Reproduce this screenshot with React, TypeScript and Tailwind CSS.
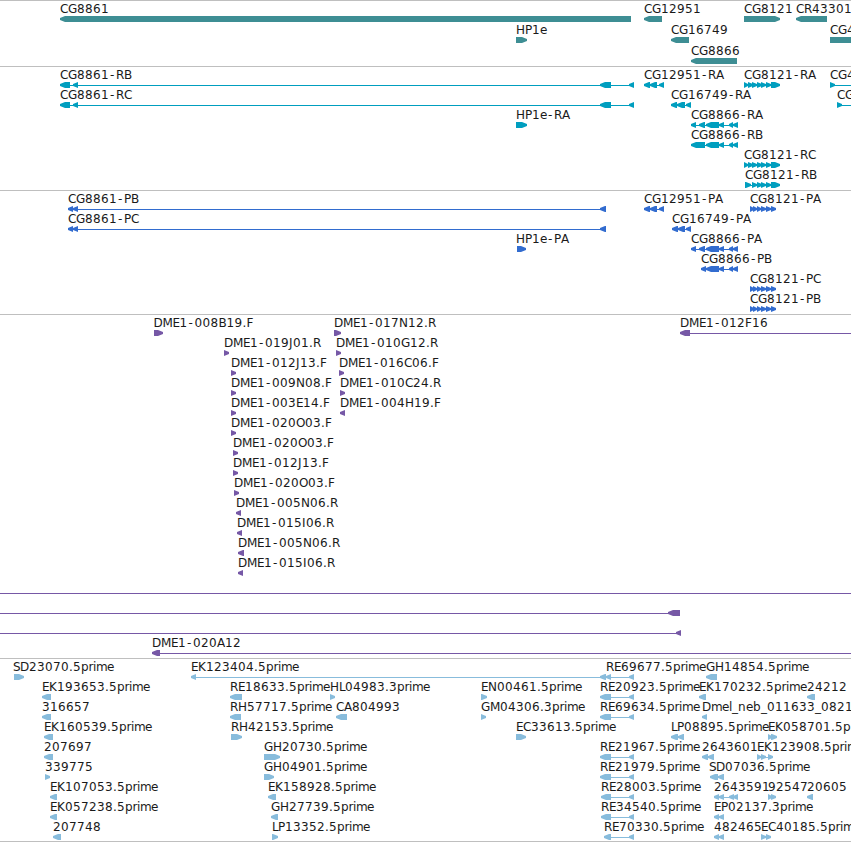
import React from 'react';

type Span = [number, number];

interface Feature {
  row: number;
  x: number;
  label?: string;
  dir: 'L' | 'R';
  blocks: Span[];
  // connector range, when it runs past the blocks
  line?: Span;
}

interface Track {
  id: string;
  height: string;
  pitch: number;
  color: string;
  features: Feature[];
}

const WIDTH = 851;

// Advance widths of the label glyphs
const ADVANCE: Record<string, number> = {
  A: 8, B: 8, C: 8, D: 9, E: 7, F: 7, G: 9, H: 9, I: 4, J: 4, K: 8, L: 6, M: 10, N: 9, O: 9,
  P: 7, R: 8, S: 7, '-': 7, '.': 4, _: 6,
  p: 7.5, r: 4.5, i: 3, m: 11, e: 7, l: 3, n: 8, b: 8,
};

const glyphPositions = (label: string, start: number) => {
  let x = start;
  return label
    .split('')
    .map((char) => {
      // the hyphen sits in the middle of its wide cell
      const current = char === '-' ? x + 1 : x;
      x += ADVANCE[char] ?? 8;
      return current;
    })
    .join(' ');
};

const f = (row: number, x: number, label: string, dir: 'L' | 'R', blocks: Span[], line?: Span): Feature => ({
  row, x, label, dir, blocks, line,
});

const CG12951: Span[] = [[644, 650], [650, 657], [659, 664]];
const CG8866_TAIL: Span[] = [[706, 719], [719, 724], [729, 733], [733, 738]];
const CG8121_TAIL: Span[] = [[752, 757], [757, 762], [761, 766], [766, 771], [771, 780]];
const CG8121_P: Span[] = [[750, 754], [753, 757], [757, 761], [761, 766], [766, 771], [771, 776]];
const RE_BLOCKS: Span[] = [[600, 611], [629, 634]];

const TRACKS: Track[] = [
  {
    id: 'gene',
    height: 'h-[66px]',
    pitch: 21,
    color: 'text-[#3e8e94]',
    features: [
      f(0, 60, 'CG8861', 'L', [[60, 631]]),
      f(0, 644, 'CG12951', 'L', [[644, 662]]),
      f(0, 744, 'CG8121', 'R', [[744, 780]]),
      f(0, 796, 'CR43301', 'L', [[796, 827]]),
      f(1, 516, 'HP1e', 'R', [[516, 527]]),
      f(1, 671, 'CG16749', 'L', [[671, 689]]),
      f(1, 830, 'CG4', 'R', [[830, 880]]),
      f(2, 691, 'CG8866', 'L', [[691, 737]]),
    ],
  },
  {
    id: 'transcript',
    height: 'h-[124px]',
    pitch: 20,
    color: 'text-[#009ebf]',
    features: [
      f(0, 60, 'CG8861-RB', 'L', [[60, 70], [73, 78], [600, 611], [629, 634]]),
      f(0, 644, 'CG12951-RA', 'L', CG12951),
      f(0, 744, 'CG8121-RA', 'R', [[744, 748], [748, 753], ...CG8121_TAIL]),
      f(0, 830, 'CG4', 'R', [[830, 835]], [830, 860]),
      f(1, 60, 'CG8861-RC', 'L', [[60, 70], [73, 78], [600, 611], [629, 634]]),
      f(1, 671, 'CG16749-RA', 'L', [[671, 677], [677, 685], [686, 691]]),
      f(1, 837, 'CG', 'R', [[837, 842]], [837, 860]),
      f(2, 516, 'HP1e-RA', 'R', [[516, 527]]),
      f(2, 691, 'CG8866-RA', 'L', [[691, 696], [699, 705], ...CG8866_TAIL]),
      f(3, 691, 'CG8866-RB', 'L', [[691, 705], ...CG8866_TAIL]),
      f(4, 744, 'CG8121-RC', 'R', [[744, 748], [748, 753], ...CG8121_TAIL]),
      f(5, 745, 'CG8121-RB', 'R', [[745, 751], ...CG8121_TAIL]),
    ],
  },
  {
    id: 'cds',
    height: 'h-[124px]',
    pitch: 20,
    color: 'text-[#326ccf]',
    features: [
      f(0, 68, 'CG8861-PB', 'L', [[68, 73], [73, 78], [600, 606]]),
      f(0, 644, 'CG12951-PA', 'L', CG12951),
      f(0, 750, 'CG8121-PA', 'R', CG8121_P),
      f(1, 68, 'CG8861-PC', 'L', [[68, 73], [73, 78], [600, 606]]),
      f(1, 672, 'CG16749-PA', 'L', [[672, 678], [678, 685], [686, 691]]),
      f(2, 516, 'HP1e-PA', 'R', [[517, 526]]),
      f(2, 691, 'CG8866-PA', 'L', [[691, 696], [699, 705], ...CG8866_TAIL]),
      f(3, 701, 'CG8866-PB', 'L', [[701, 706], ...CG8866_TAIL]),
      f(4, 750, 'CG8121-PC', 'R', CG8121_P),
      f(5, 750, 'CG8121-PB', 'R', CG8121_P),
    ],
  },
  {
    id: 'clones',
    height: 'h-[344px]',
    pitch: 20,
    color: 'text-[#7658a6]',
    features: [
      f(0, 153.5, 'DME1-008B19.F', 'R', [[154, 163]]),
      f(0, 334, 'DME1-017N12.R', 'R', [[334, 341]]),
      f(0, 680, 'DME1-012F16', 'L', [[680, 690]], [680, 860]),
      f(1, 224, 'DME1-019J01.R', 'R', [[224, 229]]),
      f(1, 336, 'DME1-010G12.R', 'R', [[336, 341]]),
      f(2, 231, 'DME1-012J13.F', 'R', [[231, 236]]),
      f(2, 339, 'DME1-016C06.F', 'R', [[339, 344]]),
      f(3, 231, 'DME1-009N08.F', 'R', [[231, 236]]),
      f(3, 340, 'DME1-010C24.R', 'R', [[340, 345]]),
      f(4, 231, 'DME1-003E14.F', 'R', [[231, 236]]),
      f(4, 340, 'DME1-004H19.F', 'L', [[340, 345]]),
      f(5, 231, 'DME1-020O03.F', 'R', [[231, 236]]),
      f(6, 233, 'DME1-020O03.F', 'R', [[233, 238]]),
      f(7, 233, 'DME1-012J13.F', 'R', [[233, 238]]),
      f(8, 234, 'DME1-020O03.F', 'R', [[234, 239]]),
      f(9, 236, 'DME1-005N06.R', 'L', [[236, 241]]),
      f(10, 237, 'DME1-015I06.R', 'L', [[237, 242]]),
      f(11, 238, 'DME1-005N06.R', 'L', [[238, 244]]),
      f(12, 238, 'DME1-015I06.R', 'L', [[238, 243]]),
      f(13, 0, '', 'L', [], [0, 860]),
      f(14, 0, '', 'L', [[668, 680]], [0, 680]),
      f(15, 0, '', 'L', [[676, 681]], [0, 681]),
      f(16, 152, 'DME1-020A12', 'L', [[152, 160]], [152, 860]),
    ],
  },
  {
    id: 'est',
    height: 'h-[183px]',
    pitch: 20,
    color: 'text-[#88bcdc]',
    features: [
      f(0, 13, 'SD23070.5prime', 'R', [[14, 24]]),
      f(0, 191, 'EK123404.5prime', 'L', [[191, 196], [600, 606]]),
      f(0, 606, 'RE69677.5prime', 'L', [[606, 611], [629, 634]]),
      f(0, 706, 'GH14854.5prime', 'L', [[706, 717]]),
      f(1, 42, 'EK193653.5prime', 'L', [[42, 51]]),
      f(1, 230, 'RE18633.5prime', 'L', [[230, 242]]),
      f(1, 330, 'HL04983.3prime', 'R', [[330, 335]]),
      f(1, 481, 'EN00461.5prime', 'R', [[481, 487]]),
      f(1, 600, 'RE20923.5prime', 'L', RE_BLOCKS),
      f(1, 699, 'EK170232.5prime', 'L', [[699, 706]]),
      f(1, 807, '24212', 'L', [[807, 815]]),
      f(2, 42, '316657', 'L', [[42, 51]]),
      f(2, 230, 'RH57717.5prime', 'L', [[230, 241]]),
      f(2, 336, 'CA804993', 'L', [[336, 347]]),
      f(2, 481, 'GM04306.3prime', 'R', [[481, 486]]),
      f(2, 600, 'RE69634.5prime', 'L', RE_BLOCKS),
      f(2, 702, 'Dmel_neb_011633_0821', 'L', [[702, 707]]),
      f(3, 44, 'EK160539.5prime', 'L', [[44, 53]]),
      f(3, 231, 'RH42153.5prime', 'R', [[231, 242]]),
      f(3, 516, 'EC33613.5prime', 'R', [[516, 526]]),
      f(3, 671, 'LP08895.5prime', 'L', [[671, 678], [678, 684]]),
      f(3, 768, 'EK058701.5p', 'R', [[768, 772], [771, 777]]),
      f(4, 44, '207697', 'L', [[44, 53]]),
      f(4, 264, 'GH20730.5prime', 'R', [[264, 280]]),
      f(4, 600, 'RE21967.5prime', 'L', RE_BLOCKS),
      f(4, 702, '2643601', 'L', [[702, 708], [708, 714]]),
      f(4, 757, 'EK123908.5prime', 'R', [[757, 761], [761, 766], [768, 773]]),
      f(5, 45, '339775', 'R', [[45, 50]]),
      f(5, 264, 'GH04901.5prime', 'R', [[264, 274]]),
      f(5, 600, 'RE21979.5prime', 'L', RE_BLOCKS),
      f(5, 709, 'SD07036.5prime', 'L', [[710, 718], [718, 724]]),
      f(6, 50, 'EK107053.5prime', 'L', [[50, 57]]),
      f(6, 268, 'EK158928.5prime', 'L', [[268, 276]]),
      f(6, 601, 'RE28003.5prime', 'L', [[601, 611], [629, 634]]),
      f(6, 714, '2643591', 'L', [[714, 719], [719, 724], [729, 734], [733, 738]]),
      f(6, 768, '92547', 'R', [[768, 772], [771, 776]]),
      f(6, 807, '20605', 'L', [[807, 813]]),
      f(7, 50, 'EK057238.5prime', 'L', [[50, 57]]),
      f(7, 271, 'GH27739.5prime', 'L', [[271, 278]]),
      f(7, 601, 'RE34540.5prime', 'L', [[601, 611], [629, 634]]),
      f(7, 714, 'EP02137.3prime', 'L', [[714, 719], [719, 724]]),
      f(8, 53, '207748', 'L', [[53, 61]]),
      f(8, 272, 'LP13352.5prime', 'R', [[272, 278]]),
      f(8, 604, 'RE70330.5prime', 'L', [[604, 611], [629, 634]]),
      f(8, 714, '482465', 'L', [[714, 719], [719, 724]]),
      f(8, 761, 'EC40185.5prime', 'R', [[761, 766], [766, 771]]),
    ],
  },
];

// Box with a blunt arrow head on the strand's side
function Block({ span, dir, top }: { span: Span; dir: 'L' | 'R'; top: number }) {
  const [a, b] = span;
  const head = Math.min(5, b - a);
  const bottom = top + 6;
  const tip = dir === 'L' ? a : b;
  const neck = dir === 'L' ? a + head : b - head;
  const end = dir === 'L' ? b : a;
  return (
    <polygon
      points={`${tip},${top + 2} ${neck},${top} ${end},${top} ${end},${bottom} ${neck},${bottom} ${tip},${top + 4}`}
    />
  );
}

function FeatureGlyph({ feature, pitch }: { feature: Feature; pitch: number }) {
  const { row, x, label, dir, blocks, line } = feature;
  const y = row * pitch;
  const range = line ?? (blocks.length > 1 ? [blocks[0][0], blocks[blocks.length - 1][1]] : null);

  return (
    <g>
      {range && <rect x={range[0]} y={y + 18} width={range[1] - range[0]} height={1} />}
      {blocks.map((span) => (
        <Block key={span[0]} span={span} dir={dir} top={y + 15} />
      ))}
      {label && (
        <text x={glyphPositions(label, x)} y={y + 12} className="fill-[#1a1a1a]">
          {label}
        </text>
      )}
    </g>
  );
}

function TrackPanel({ track }: { track: Track }) {
  return (
    <section className={`border-t border-[#bfbfbf] ${track.height} ${track.color}`}>
      <svg
        width={WIDTH}
        height="100%"
        className="block fill-current font-['DejaVu_Sans',sans-serif] text-[12px]"
      >
        {track.features.map((feature, i) => (
          <FeatureGlyph key={i} feature={feature} pitch={track.pitch} />
        ))}
      </svg>
    </section>
  );
}

export default function App() {
  return (
    <main className="flex flex-col w-[851px] h-[842px] overflow-hidden bg-white">
      {TRACKS.map((track) => (
        <TrackPanel key={track.id} track={track} />
      ))}
      <div className="h-px bg-[#bfbfbf]" />
    </main>
  );
}
